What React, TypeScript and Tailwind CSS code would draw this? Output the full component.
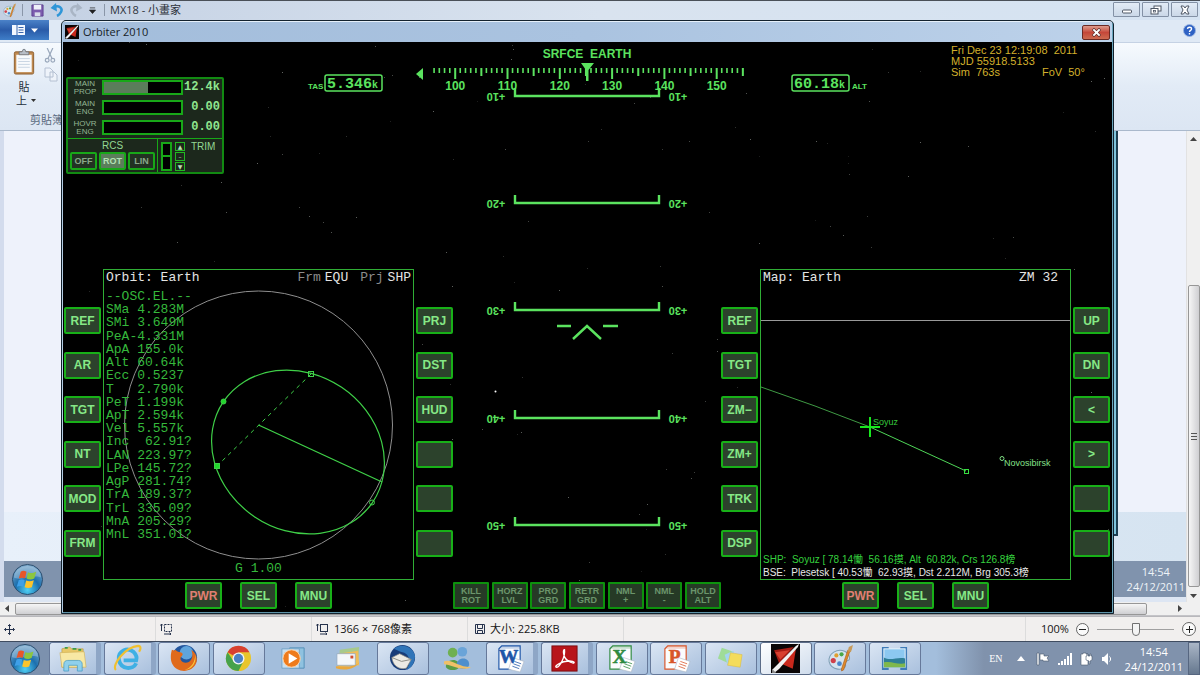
import type { ReactNode } from "react";
import clsx from "clsx";

const ORBIT_ELEMENTS = [
  "--OSC.EL.--",
  "SMa 4.283M",
  "SMi 3.649M",
  "PeA-4.331M",
  "ApA 155.0k",
  "Alt 60.64k",
  "Ecc 0.5237",
  "T   2.790k",
  "PeT 1.199k",
  "ApT 2.594k",
  "Vel 5.557k",
  "Inc  62.91?",
  "LAN 223.97?",
  "LPe 145.72?",
  "AgP 281.74?",
  "TrA 189.37?",
  "TrL 335.09?",
  "MnA 205.29?",
  "MnL 351.01?",
];

const AUTOPILOT = [
  ["KILL", "ROT"],
  ["HORZ", "LVL"],
  ["PRO", "GRD"],
  ["RETR", "GRD"],
  ["NML", "+"],
  ["NML", "-"],
  ["HOLD", "ALT"],
];

// faint star field, seeded so it never changes between renders
const STARS = Array.from({ length: 170 }, (_, i) => {
  const a = Math.abs(Math.sin(i * 12.9898 + 4.1) * 43758.5453) % 1;
  const b = Math.abs(Math.sin(i * 78.233 + 1.7) * 24634.6345) % 1;
  const c = Math.abs(Math.sin(i * 39.425 + 9.2) * 13758.1234) % 1;
  return { x: Math.round(a * 1048), y: Math.round(b * 566), o: 0.12 + c * 0.35 };
});

const HEADINGS = Array.from({ length: 60 }, (_, i) => 96 + i);
const headingX = (deg: number) => (deg - 125.2) * 5.23;

/* ---------- Orbiter ---------- */

function PanelButton({ label, danger }: { label: string; danger?: boolean }) {
  return (
    <button
      aria-label={label || "unassigned"}
      className={clsx(
        "h-[27px] w-[37px] shrink-0 rounded-[2px] border-2 border-[#18b018] bg-[#2c422c] text-[12px] leading-none font-bold whitespace-nowrap",
        danger ? "text-[#e07f72]" : "text-[#86e886]"
      )}
    >
      {label}
    </button>
  );
}

function Mfd({ left, right, children }: { left: string[]; right: string[]; children: ReactNode }) {
  return (
    <section className="flex shrink-0 flex-col items-center gap-[2px]">
      <div className="flex gap-[2px]">
        <div className="flex flex-col justify-between pt-[38px] pb-[23px]">
          {left.map((l, i) => (
            <PanelButton key={i} label={l} />
          ))}
        </div>
        <div className="grid h-[311px] w-[311px] border border-[#2fae35] bg-black font-['Liberation_Mono',monospace] text-[13px] leading-[13px]">
          {children}
        </div>
        <div className="flex flex-col justify-between pt-[38px] pb-[23px]">
          {right.map((l, i) => (
            <PanelButton key={i} label={l} />
          ))}
        </div>
      </div>
      <div className="flex gap-[18px]">
        <PanelButton label="PWR" danger />
        <PanelButton label="SEL" />
        <PanelButton label="MNU" />
      </div>
    </section>
  );
}

function OrbitScreen() {
  return (
    <>
      <svg className="col-start-1 row-start-1 size-full" viewBox="0 0 309 309" fill="none">
        <circle cx="154.500" cy="155" r="134" stroke="#8f8f8f" />
        <g stroke="#3fd048">
          <ellipse cx="194" cy="182" rx="90" ry="78" transform="rotate(34 194 182)" strokeWidth="1.200" />
          <path d="M207 104 L113 196" strokeDasharray="4 4" />
          <path d="M154.500 155 L278 212" strokeWidth="1.300" />
          <rect x="204.500" y="101.500" width="5" height="5" />
          <rect x="110.500" y="193.500" width="5" height="5" fill="#22d82c" />
          <circle cx="119.500" cy="131.500" r="2.500" fill="#22d82c" />
          <circle cx="268" cy="232.500" r="2.500" />
        </g>
      </svg>
      <div className="col-start-1 row-start-1 flex flex-col pt-px pr-[2px] pb-[4px] pl-[2px] text-[#35b83c]">
        <header className="flex justify-between text-[#e4e4e4]">
          <h2>Orbit: Earth</h2>
          <p className="flex gap-1">
            <span className="text-[#8c8c8c]">Frm</span>
            <span>EQU</span>
            <span className="ml-2 text-[#8c8c8c]">Prj</span>
            <span>SHP</span>
          </p>
        </header>
        <ul className="mt-[6px] flex h-[251px] flex-col justify-between whitespace-pre">
          {ORBIT_ELEMENTS.map((row) => (
            <li key={row}>{row}</li>
          ))}
        </ul>
        <p className="mt-auto text-center">G 1.00</p>
      </div>
    </>
  );
}

function MapScreen() {
  return (
    <>
      <svg className="col-start-1 row-start-1 size-full font-['Liberation_Sans',sans-serif] text-[9px]" viewBox="0 0 309 309" fill="none">
        <path d="M0 50.500 H309" stroke="#9a9a9a" />
        <path d="M0 117 L54 136 L109 157" stroke="#3f9a44" />
        <path d="M109 157 L205 201" stroke="#4fd658" />
        <path d="M99 157 H119 M109 147 V167" stroke="#18e61e" strokeWidth="2" />
        <rect x="203.500" y="199.500" width="4" height="4" stroke="#37e040" />
        <circle cx="241" cy="188.500" r="2" stroke="#7fe084" />
        <text x="112" y="155" fill="#35c83c">Soyuz</text>
        <text x="243" y="196" fill="#86e08a">Novosibirsk</text>
      </svg>
      <div className="col-start-1 row-start-1 flex flex-col justify-between pt-px pl-[2px]">
        <header className="flex justify-between pr-3 text-[#e4e4e4]">
          <h2>Map: Earth</h2>
          <span>ZM 32</span>
        </header>
        <div className="font-['Liberation_Sans','Noto_Sans_CJK_TC',sans-serif] text-[10px] leading-[13px] whitespace-pre">
          <p className="text-[#35d03e]">SHP:  Soyuz [ 78.14慟  56.16摸, Alt  60.82k, Crs 126.8榜</p>
          <p className="text-[#e8e8e8]">BSE:  Plesetsk [ 40.53慟  62.93摸, Dst 2.212M, Brg 305.3榜</p>
        </div>
      </div>
    </>
  );
}

function Gauge({ name, value, fill }: { name: [string, string]; value: string; fill: string }) {
  return (
    <div className="flex h-[15px] items-center">
      <span className="w-[34px] text-center text-[8px] leading-[8px] text-[#93b593]">
        {name[0]}
        <br />
        {name[1]}
      </span>
      <span className="h-[15px] w-[81px] border-2 border-[#18a818] bg-black">
        <span className={clsx("block h-full bg-[#5b7d5b]", fill)} />
      </span>
      <span className="flex-1 text-right font-['Liberation_Mono',monospace] text-[12px] leading-[15px] font-bold text-[#8fe68f]">
        {value}
      </span>
    </div>
  );
}

function EnginePanel() {
  return (
    <section className="w-[158px] rounded-[2px] border-2 border-[#128a12] bg-[#1c281c]">
      <div className="flex flex-col gap-[5px] pt-px pr-[2px] pb-[3px]">
        <Gauge name={["MAIN", "PROP"]} value="12.4k" fill="w-[57%]" />
        <Gauge name={["MAIN", "ENG"]} value="0.00" fill="w-0" />
        <Gauge name={["HOVR", "ENG"]} value="0.00" fill="w-0" />
      </div>
      <div className="flex border-t border-[#18a818]">
        <div className="flex flex-col items-center border-r border-[#18a818] px-[2px] pb-[2px]">
          <span className="text-[10px] leading-[13px] text-[#93d893]">RCS</span>
          <div className="flex gap-[2px]">
            {["OFF", "ROT", "LIN"].map((m) => (
              <button
                key={m}
                className={clsx(
                  "h-[18px] w-[27px] rounded-[2px] border-2 border-[#18a818] text-[9px] leading-none font-bold",
                  m === "ROT" ? "bg-[#5b7d5b] text-[#b4e0b4]" : "bg-[#223222] text-[#8aa88a]"
                )}
              >
                {m}
              </button>
            ))}
          </div>
        </div>
        <div className="flex flex-1 gap-[3px] pt-[3px] pl-[3px]">
          <div className="h-[29px] w-[11px] border-2 border-[#18a818] bg-black">
            <div className="mt-[11px] h-[2px] bg-[#18a818]" />
          </div>
          <div className="flex h-[29px] w-[10px] flex-col justify-between">
            {["▲", "–", "▼"].map((s) => (
              <button
                key={s}
                className="flex h-[9px] items-center justify-center border border-[#22b822] font-['DejaVu_Sans',sans-serif] text-[6px] leading-none text-[#b8e0b8]"
              >
                {s}
              </button>
            ))}
          </div>
          <span className="pl-[3px] text-[10px] leading-[10px] text-[#93d893]">TRIM</span>
        </div>
      </div>
    </section>
  );
}

function Hud() {
  return (
    <svg
      width="581"
      height="568"
      viewBox="-290 0 581 568"
      className="shrink-0 font-['Liberation_Sans',sans-serif] font-bold"
      fill="#5be35f"
    >
      <text x="0" y="16" textAnchor="middle" fontSize="12" className="whitespace-pre">
        SRFCE  EARTH
      </text>

      {/* heading tape */}
      <path d="M-171 32 L-164 26 V38 Z" />
      {HEADINGS.map((d) => (
        <rect
          key={d}
          x={headingX(d) - 1}
          y="26"
          width={d % 5 === 0 ? 2 : 1.6}
          height={d % 10 === 0 ? 11 : d % 5 === 0 ? 8 : 5}
        />
      ))}
      {[100, 110, 120, 130, 140, 150].map((d) => (
        <text key={d} x={headingX(d)} y="48" textAnchor="middle" fontSize="12">
          {d}
        </text>
      ))}
      <path d="M-6 21 H7 L1.500 28 V39 H-1 V28 Z" />

      {/* speed and altitude */}
      <g fill="none" stroke="#5be35f" strokeWidth="1.500">
        <rect x="-262" y="33" width="57" height="16" rx="2" />
        <rect x="205" y="33" width="57" height="16" rx="2" />
      </g>
      <g fontSize="8">
        <text x="-279" y="47">TAS</text>
        <text x="265" y="47">ALT</text>
      </g>
      <g className="font-['Liberation_Mono',monospace]" fontSize="15">
        <text x="-260" y="46">
          5.346<tspan fontSize="10">k</tspan>
        </text>
        <text x="207" y="46">
          60.18<tspan fontSize="10">k</tspan>
        </text>
      </g>

      {/* pitch ladder, inverted while pitch labels run downwards */}
      {[10, 20, 30, 40, 50].map((p, i) => {
        const y = 54 + Math.round(i * 107.2);
        return (
          <g key={p}>
            <path d={`M-72 ${y - 8} V${y} H72 V${y - 8}`} fill="none" stroke="#5be35f" strokeWidth="2.400" />
            <text fontSize="11" textAnchor="middle" transform={`translate(-91 ${y - 3}) rotate(180)`}>
              +{p}
            </text>
            <text fontSize="11" textAnchor="middle" transform={`translate(91 ${y - 3}) rotate(180)`}>
              +{p}
            </text>
          </g>
        );
      })}
      <path d="M-30 284 H-16 M16 284 H31 M-14 297 L0 284 L14 297" fill="none" stroke="#5be35f" strokeWidth="2.400" />
    </svg>
  );
}

function ShuttleIcon({ className }: { className?: string }) {
  return (
    <svg viewBox="0 0 28 28" className={className} aria-hidden="true">
      <rect width="28" height="28" fill="#0a0505" />
      <path d="M3 6 L22 3 L8 19 Z" fill="#a81c14" />
      <path d="M24 5 L21 24 L10 19 Z" fill="#c9281c" />
      <path d="M4 8 L18 6 L9 15 Z" fill="#d84030" />
      <path d="M27 0 L24 2 L1 25 L3 28 L8 24 L26 3 Z" fill="#f2f2f2" />
      <path d="M1 28 L1 24 L5 28 Z" fill="#888" />
    </svg>
  );
}

function OrbiterWindow() {
  return (
    <div className="absolute top-[20px] right-[86px] bottom-[61px] left-[61px] flex flex-col overflow-hidden rounded-t-[5px] border border-[#13222e] bg-black">
      <div className="flex flex-1 flex-col border border-t-[#e6f0fa] border-r-[#6aa6bd] border-b-[#5e93a8] border-l-[#b4cde4]">
        <div className="flex h-5 items-center gap-1 bg-linear-to-r from-[#a3bddb] via-[#aac3e0] to-[#bdd2ea] pr-[2px] pl-[2px]">
          <ShuttleIcon className="size-[14px]" />
          <h1 className="flex-1 font-['Open_Sans','Noto_Sans',sans-serif] text-[11px] text-[#151c26]">Orbiter 2010</h1>
          <button
            aria-label="Close Orbiter"
            className="flex h-[15px] w-[28px] items-center justify-center rounded-[2px] border border-[#6b2a24] bg-linear-to-b from-[#dd9a8c] via-[#c4473a] to-[#cc6a50]"
          >
            <svg viewBox="0 0 12 10" className="h-[9px] w-[11px]">
              <path d="M2 1 L10 9 M10 1 L2 9" stroke="#5c3030" strokeWidth="3.600" />
              <path d="M2.500 1.500 L9.500 8.500 M9.500 1.500 L2.500 8.500" stroke="#fff" strokeWidth="2.200" />
            </svg>
          </button>
        </div>

        <main className="relative flex flex-1 flex-col justify-between font-['Liberation_Sans',sans-serif]">
          <svg className="absolute inset-0 size-full" aria-hidden="true">
            {STARS.map((s, i) => (
              <rect key={i} x={s.x} y={s.y} width="1" height="1" fill="#cfd6cf" opacity={s.o} />
            ))}
            <circle cx="432.500" cy="349.500" r="1" fill="#fff" />
          </svg>
          <div className="absolute inset-0 flex justify-center">
            <Hud />
          </div>

          <div className="relative flex items-start justify-between">
            <div className="pt-[35px] pl-[3px]">
              <EnginePanel />
            </div>
            <div className="w-[161px] pt-[3px] text-[11px] leading-[11px] whitespace-pre text-[#d3b02c]">
              <p>Fri Dec 23 12:19:08  2011</p>
              <p>MJD 55918.5133</p>
              <p className="flex gap-[42px]">
                <span>Sim  763s</span>
                <span>FoV  50°</span>
              </p>
            </div>
          </div>

          <div className="relative flex items-end pr-[2px] pb-[3px] pl-px">
            <Mfd left={["REF", "AR", "TGT", "NT", "MOD", "FRM"]} right={["PRJ", "DST", "HUD", "", "", ""]}>
              <OrbitScreen />
            </Mfd>
            <div className="flex flex-1 justify-between">
              {AUTOPILOT.map(([a, b]) => (
                <button
                  key={a + b}
                  className="h-[27px] w-[36px] rounded-[1px] border-2 border-[#0d920d] bg-[#263a26] text-[9px] leading-[9px] font-bold text-[#6b956b]"
                >
                  {a}
                  <br />
                  {b}
                </button>
              ))}
            </div>
            <Mfd left={["REF", "TGT", "ZM−", "ZM+", "TRK", "DSP"]} right={["UP", "DN", "<", ">", "", ""]}>
              <MapScreen />
            </Mfd>
          </div>
        </main>
      </div>
    </div>
  );
}

/* ---------- Paint ---------- */

function PaletteIcon({ className }: { className?: string }) {
  return (
    <svg viewBox="0 0 28 28" className={className} aria-hidden="true">
      <path d="M3 17 C2 9 11 4 18 7 C23 9 24 15 21 16 C18 17 18 19 19 21 C18 26 5 26 3 17 Z" fill="#d5e4ee" stroke="#7f9fb5" />
      <circle cx="7" cy="16" r="2.500" fill="#d0404a" />
      <circle cx="10" cy="11" r="2" fill="#e0a030" />
      <circle cx="15" cy="10" r="2" fill="#4aa848" />
      <circle cx="13" cy="19" r="2.300" fill="#4a86cc" />
      <path d="M23 7 L17 25 L15 26 L15 24 L21 6 Z" fill="#e08a2c" stroke="#a85c18" strokeWidth=".6" />
      <path d="M21 7 L22 3 L26 1 L25 5 L24 8 Z" fill="#c79a5a" />
    </svg>
  );
}

function CaptionButton({ label, children }: { label: string; children: ReactNode }) {
  return (
    <button
      aria-label={label}
      className="flex h-[15px] w-[27px] items-center justify-center rounded-[1px] border border-[#8391a5] bg-linear-to-b from-[#e3ecf6] to-[#cbd8e8]"
    >
      <svg viewBox="0 0 12 10" className="h-[10px] w-[12px]" fill="#fff" stroke="#4d5664">
        {children}
      </svg>
    </button>
  );
}

function PaintTitleBar() {
  return (
    <header className="flex h-5 shrink-0 items-start border-t border-[#4a5058] bg-linear-to-r from-[#c3d0e3] via-[#d9e3ef] to-[#d5e3f2] pr-[2px]">
      <div className="flex h-[18px] items-center pl-[2px]">
        <PaletteIcon className="size-[15px]" />
        <span className="ml-[5px] h-3 w-px bg-[#8a96a8]" />
        <button aria-label="Save" className="ml-2">
          <svg viewBox="0 0 14 14" className="size-[13px]">
            <path d="M1 1 H13 V13 H1 Z" fill="#7c5cae" stroke="#5c4090" />
            <rect x="3" y="1" width="8" height="5" fill="#eef0fa" />
            <rect x="4" y="9" width="6" height="4" fill="#d8dcea" />
          </svg>
        </button>
        <button aria-label="Undo" className="ml-[6px]">
          <svg viewBox="0 0 14 14" className="size-[14px]" fill="none">
            <path d="M4 4 C9 2 13 5 11 9 C10 11 9 12 7 13" stroke="#2f96d8" strokeWidth="2.600" />
            <path d="M0.500 5 L6 0 L7 8.500 Z" fill="#2f96d8" />
          </svg>
        </button>
        <button aria-label="Redo" className="ml-[5px]">
          <svg viewBox="0 0 14 14" className="size-[14px]" fill="none">
            <path d="M10 4 C5 2 1 5 3 9 C4 11 5 12 7 13" stroke="#a9b5c5" strokeWidth="2.600" />
            <path d="M13.500 5 L8 0 L7 8.500 Z" fill="#a9b5c5" />
          </svg>
        </button>
        <button aria-label="Customize quick access" className="ml-[6px]">
          <svg viewBox="0 0 8 8" className="size-[7px]">
            <path d="M1 1 H7 M0.500 3.500 H7.500 L4 7.500 Z" stroke="#222" strokeWidth=".8" fill="#222" />
          </svg>
        </button>
        <span className="mr-[5px] ml-2 h-3 w-px bg-[#8a96a8]" />
        <span className="font-['Open_Sans','Noto_Sans_CJK_TC',sans-serif] text-[11px] leading-[16px] text-[#2c3138]">MX18 - 小畫家</span>
      </div>
      <div className="ml-auto flex gap-[2px] pt-px">
        <CaptionButton label="Minimize">
          <rect x="1.500" y="5" width="9" height="3" rx="1" />
        </CaptionButton>
        <CaptionButton label="Restore">
          <rect x="4" y="1" width="7" height="5" />
          <rect x="1" y="3.500" width="7" height="5.500" />
          <rect x="3.500" y="5.500" width="2" height="1.500" strokeWidth=".8" />
        </CaptionButton>
        <CaptionButton label="Close">
          <path d="M2 1 H4.500 L6 3 L7.500 1 H10 L8 5 L10 9 H7.500 L6 7 L4.500 9 H2 L4 5 Z" />
        </CaptionButton>
      </div>
    </header>
  );
}

function Ribbon() {
  return (
    <div className="shrink-0">
      <div className="flex h-[22px] items-start justify-between bg-[#dfe9f5] pr-1">
        <button
          aria-label="Paint menu"
          className="flex h-5 w-[49px] items-center justify-center gap-[6px] bg-linear-to-b from-[#4b82c8] via-[#2a5ba8] to-[#3f7ec8]"
        >
          <svg viewBox="0 0 13 10" className="h-[10px] w-[13px]">
            <rect width="13" height="10" fill="#f4f8ff" />
            <path d="M5 0 V10 M6.500 2.500 H11.500 M6.500 5 H11.500 M6.500 7.500 H11.500" stroke="#3a66ac" />
          </svg>
          <svg viewBox="0 0 7 5" className="h-[5px] w-[7px]">
            <path d="M0 0.500 H7 L3.500 4.500 Z" fill="#fff" />
          </svg>
        </button>
        <button aria-label="Help" className="mt-1">
          <svg viewBox="0 0 14 14" className="size-[13px]">
            <circle cx="7" cy="7" r="6.500" fill="#2f62c4" stroke="#9ab4e0" />
            <path d="M4.800 5.300 C5 2.800 9.300 2.800 9.200 5.300 C9.100 6.800 7 7 7 8.600 M7 9.800 V11.300" stroke="#fff" strokeWidth="1.500" fill="none" />
          </svg>
        </button>
      </div>
      <div className="flex h-[89px] border-t border-b border-t-[#c5d2e4] border-b-[#aab9cc] bg-linear-to-b from-[#f6fafe] via-[#e2ebf6] to-[#dce6f3] pl-3 font-['Noto_Sans_CJK_TC',sans-serif] text-[11px] leading-[14px] text-[#26303c]">
        <div className="flex w-[90px] flex-col justify-between">
          <div className="flex gap-2 pt-[5px]">
            <button className="flex flex-col items-center">
              <svg viewBox="0 0 24 28" className="h-[27px] w-6">
                <rect x="2" y="4" width="20" height="23" rx="1.500" fill="#c08a50" stroke="#8e5f30" />
                <rect x="4" y="7" width="16" height="18" fill="#f8fafc" />
                <path d="M6 11 H18 M6 14 H18 M6 17 H18 M6 20 H18" stroke="#c8d4e2" />
                <path d="M7 7 V4 H10 L11 1.500 H13 L14 4 H17 V7 Z" fill="#b8bec6" stroke="#686e78" strokeWidth=".8" />
              </svg>
              <span className="pt-[4px]">貼</span>
              <span className="flex items-center gap-1 pl-1">
                上
                <svg viewBox="0 0 5 3" className="h-[3px] w-[5px]">
                  <path d="M0 0 H5 L2.500 3 Z" fill="#333" />
                </svg>
              </span>
            </button>
            <div className="flex flex-col gap-1">
              <svg viewBox="0 0 12 16" className="h-[15px] w-3" fill="none" stroke="#9aa8bc" strokeWidth="1.300">
                <path d="M3 0 L8 11 M9 0 L4 11" />
                <circle cx="3" cy="13" r="2" />
                <circle cx="9" cy="13" r="2" />
              </svg>
              <svg viewBox="0 0 14 15" className="h-[15px] w-[14px]" fill="#eef3fa" stroke="#b4c0d2">
                <path d="M1 1 H6 L9 4 V10 H1 Z M6 5 H10 L13 8 V14 H6 Z" />
              </svg>
            </div>
          </div>
          <span className="pb-[4px] pl-[18px] whitespace-nowrap text-[#5a6a80]">剪貼簿</span>
        </div>
      </div>
    </div>
  );
}

function StartOrb({ className }: { className?: string }) {
  return (
    <svg viewBox="0 0 34 34" className={className} aria-hidden="true">
      <defs>
        <radialGradient id="orb" cx=".5" cy=".85" r=".9">
          <stop offset="0" stopColor="#4fd0f4" />
          <stop offset=".45" stopColor="#1c6fae" />
          <stop offset="1" stopColor="#8db4d2" />
        </radialGradient>
      </defs>
      <circle cx="17" cy="17" r="15.500" fill="url(#orb)" stroke="#2c4c6c" />
      <path d="M3 15 C4 -1 30 -1 31 15 C24 11 10 19 3 15 Z" fill="#fff" opacity=".25" />
      <path d="M10 9 C12 7.500 14 8 16 9 L14.500 16 C12.500 15 10.500 15 8 16 Z" fill="#e8562a" />
      <path d="M17.500 9.500 C20 11 22.500 10.500 26 9 L24 16 C21 17.500 18.500 17 16 16 Z" fill="#8cc63f" />
      <path d="M8 17.500 C10 16.500 12 16.500 14 17.500 L12.500 24.500 C10.500 23.500 8.500 23.500 6 24.500 Z" fill="#3fa0e8" />
      <path d="M15.700 18 C18 19.200 20.500 19 23.500 17.700 L21.500 25 C19 26 16.500 26 14 25 Z" fill="#fcc42c" />
    </svg>
  );
}

function PaintCanvas() {
  return (
    <div className="flex min-h-0 flex-1">
      <div className="flex min-w-0 flex-1 flex-col overflow-hidden border-l-4 border-[#d3dced] bg-[#eef2fb]">
        <div className="flex flex-1 justify-end pr-[68px]">
          <div className="relative -mb-6 w-[5px] border-r-2 border-b-2 border-[#1c3d50] bg-[#7fc4dc]" />
        </div>
        <div className="h-[49px] bg-linear-to-r from-[#e8f0fa] to-[#d6e4f1]" />
        <div className="flex h-9 items-center justify-between bg-[#8093ad] pr-px pl-[7px] font-['Open_Sans',sans-serif] text-[11px] leading-[15px] text-[#eef3f8]">
          <StartOrb className="size-[33px]" />
          <p className="text-center">
            14:54
            <br />
            24/12/2011
          </p>
        </div>
        <div className="h-[5px] bg-[#dde6f3]" />
      </div>
      <div className="flex w-[14px] shrink-0 flex-col items-center border-l border-[#e2e2e2] bg-[#f0f0f0] pt-[6px] pb-1">
        <svg viewBox="0 0 7 4" className="h-1 w-[7px]"><path d="M0 4 L3.500 0 L7 4 Z" fill="#444" /></svg>
        <div className="mt-[144px] flex w-3 flex-1 flex-col items-center justify-center gap-[2px] rounded-[2px] border border-[#979797] bg-linear-to-r from-[#f6f6f6] to-[#cfcfd2]">
          <span className="h-px w-[6px] bg-[#555]" />
          <span className="h-px w-[6px] bg-[#555]" />
          <span className="h-px w-[6px] bg-[#555]" />
        </div>
        <svg viewBox="0 0 7 4" className="mt-[7px] h-1 w-[7px]"><path d="M0 0 L3.500 4 L7 0 Z" fill="#444" /></svg>
      </div>
    </div>
  );
}

function StatusCell({ className, children }: { className?: string; children?: ReactNode }) {
  return <div className={clsx("flex w-[156px] items-center gap-[5px] border-r border-[#dcdcdc] pl-1", className)}>{children}</div>;
}

function StatusBar() {
  return (
    <footer className="flex h-[25px] shrink-0 items-stretch border-t border-[#b8b8bc] bg-[#f1efee] font-['Open_Sans','Noto_Sans_CJK_TC',sans-serif] text-[11px] text-[#151515]">
      <StatusCell>
        <svg viewBox="0 0 11 11" className="size-[11px]" fill="none" stroke="#26324c">
          <path d="M5.500 0.500 V10.500 M0.500 5.500 H10.500 M4 2 L5.500 0.500 L7 2 M4 9 L5.500 10.500 L7 9 M2 4 L0.500 5.500 L2 7 M9 4 L10.500 5.500 L9 7" />
        </svg>
      </StatusCell>
      <StatusCell>
        <svg viewBox="0 0 13 12" className="h-3 w-[13px]" fill="none" stroke="#26324c">
          <path d="M1.500 1 V8 M0.500 2.500 L1.500 1 L3 2.500 M4 11 H11 M9.500 9.500 L11 11 L9.500 12" />
          <rect x="4.500" y="1.500" width="7" height="7" strokeDasharray="2 1" />
        </svg>
      </StatusCell>
      <StatusCell>
        <svg viewBox="0 0 13 12" className="h-3 w-[13px]" fill="none" stroke="#26324c">
          <path d="M1.500 1 V8 M0.500 2.500 L1.500 1 L3 2.500 M4 11 H11 M9.500 9.500 L11 11 L9.500 12" />
          <rect x="4.500" y="1.500" width="7" height="7" />
        </svg>
        1366 × 768像素
      </StatusCell>
      <StatusCell className="pl-[7px]">
        <svg viewBox="0 0 10 10" className="size-[10px]" fill="none" stroke="#26324c">
          <path d="M0.500 0.500 H9.500 V9.500 H0.500 Z M2.500 1 V4.500 H7.500 V1 M2.500 9 V6.500 H7.500 V9" />
        </svg>
        大小: 225.8KB
      </StatusCell>
      <div className="flex-1 border-r border-[#dcdcdc]" />
      <div className="flex w-[174px] items-center pr-1 pl-[15px]">
        <label htmlFor="zoom" className="w-[35px]">100%</label>
        <button aria-label="Zoom out" className="flex size-[13px] items-center justify-center rounded-full border border-[#666] bg-[#fafafa]">
          <span className="h-px w-[7px] bg-[#222]" />
        </button>
        <input
          id="zoom"
          type="range"
          defaultValue={50}
          className="mx-2 h-4 min-w-0 flex-1 appearance-none bg-transparent bg-[linear-gradient(#a0a0a0,#a0a0a0)] bg-[length:100%_1px] bg-center bg-no-repeat [&::-webkit-slider-thumb]:h-[13px] [&::-webkit-slider-thumb]:w-2 [&::-webkit-slider-thumb]:appearance-none [&::-webkit-slider-thumb]:rounded-b-[4px] [&::-webkit-slider-thumb]:border [&::-webkit-slider-thumb]:border-[#707070] [&::-webkit-slider-thumb]:bg-[#f4f4f4]"
        />
        <button aria-label="Zoom in" className="flex size-[14px] items-center justify-center rounded-full border border-[#666] bg-[#fafafa]">
          <svg viewBox="0 0 9 9" className="size-[9px]" stroke="#222"><path d="M4.500 1 V8 M1 4.500 H8" /></svg>
        </button>
      </div>
    </footer>
  );
}

/* ---------- Taskbar ---------- */

function OfficeIcon({ letter, color }: { letter: string; color: string }) {
  return (
    <>
      <path d="M6 2 H25 V26 H3 V5 Z" fill="#fbfcfe" stroke={color} strokeWidth="1.200" />
      <path d="M6 2 H25 V5 H4 Z" fill={color} opacity=".25" />
      <path d="M17 14 L29 18 L25 29 L13 26 Z" fill="#fff" stroke="#a8b4c2" strokeWidth=".6" />
      <path d="M19 18 L26 20.500 M18 20.500 L25 23 M17 23 L24 25.500" stroke={color} strokeWidth=".8" />
      <text
        x="13"
        y="20"
        textAnchor="middle"
        fontSize="20"
        fontWeight="bold"
        fill={color}
        stroke={color}
        strokeWidth=".6"
        className="font-['Liberation_Serif',serif]"
      >
        {letter}
      </text>
    </>
  );
}

type Task = { name: string; open?: boolean; stacked?: boolean; active?: boolean; icon: ReactNode };

const TASKS: Task[] = [
  {
    name: "Windows Explorer",
    open: true,
    stacked: true,
    icon: (
      <>
        <path d="M3 5 L11 3 L13 5 H25 V24 H3 Z" fill="#e8c868" stroke="#b8953c" strokeWidth=".6" />
        <path d="M6 4 H9 M14 5 H18 M20 6 H23" stroke="#3c9c48" strokeWidth="1.800" />
        <path d="M1 9 L26 8 L28 24 H3 Z" fill="#f8e8a4" stroke="#cfae54" strokeWidth=".6" />
        <path d="M5 28 V21 C5 18 7 17 9 17 H20 C23 17 24 19 24 21 V28 H19 V22 H10 V28 Z" fill="#8fd0ec" stroke="#4a9cc4" strokeWidth=".8" />
      </>
    ),
  },
  {
    name: "Internet Explorer",
    open: true,
    stacked: true,
    icon: (
      <>
        <path d="M24 20 C21 27 8 27 6 16 C5 7 15 3 21 8 C24 11 25 14 24 17 H11" fill="none" stroke="#3fb0e4" strokeWidth="4" />
        <path d="M3 27 C-2 22 13 3 26 2 C29 2 29 5 27 8" fill="none" stroke="#f0c030" strokeWidth="2.200" />
      </>
    ),
  },
  {
    name: "Firefox",
    open: true,
    icon: (
      <>
        <circle cx="15" cy="14" r="13" fill="#23569e" />
        <circle cx="17" cy="9" r="7" fill="#5fa4dc" />
        <path d="M2 6 C4 7 5 7 6 6 C7 9 12 8 13 10 C14 12 10 13 11 16 C13 21 20 20 22 16 C24 12 23 9 22 6 C27 9 29 15 27 20 C23 30 7 31 2 20 C0 15 1 9 2 6 Z" fill="#e06a1c" />
        <path d="M26 11 C28 19 23 26 15 27 C23 24 26 18 26 11 Z" fill="#f8c83c" />
      </>
    ),
  },
  {
    name: "Chrome",
    open: true,
    icon: (
      <>
        <circle cx="15" cy="15" r="13" fill="#e8c52c" />
        <path d="M15 15 L3.700 8.500 A13 13 0 0 1 26.300 8.500 H15 Z" fill="#d8402f" />
        <path d="M3.700 8.500 A13 13 0 0 0 15 28 L20 18 L10 18 Z" fill="#46a24c" />
        <circle cx="15" cy="15" r="6.200" fill="#f2f4f6" />
        <circle cx="15" cy="15" r="4.800" fill="#4a80c4" />
      </>
    ),
  },
  {
    name: "Media Player",
    icon: (
      <>
        <path d="M11 4 H26 V25 H11 Z" fill="#8fc2e0" stroke="#5590b8" />
        <path d="M3 5 H21 V25 H3 Z" fill="#c8dff0" stroke="#74a4c8" />
        <circle cx="13" cy="15" r="9" fill="#ee7b1c" stroke="#fbd8b0" />
        <path d="M10 9.500 V20.500 L19 15 Z" fill="#fff" />
      </>
    ),
  },
  {
    name: "Mail",
    icon: (
      <>
        <path d="M6 6 L26 3 L25 17 L5 20 Z" fill="#a7c98c" />
        <path d="M4 10 L25 7 L26 22 L4 24 Z" fill="#f0bd58" />
        <path d="M3 10 H22 V22 H3 Z" fill="#f4f7fa" stroke="#90a8c0" strokeWidth=".8" />
        <rect x="17" y="12" width="3" height="3" fill="#d05030" />
        <path d="M2 25 C12 28 22 26 27 18 C24 23 14 24 2 23 Z" fill="#eaa83c" />
      </>
    ),
  },
  {
    name: "Thunderbird",
    open: true,
    icon: (
      <>
        <circle cx="15" cy="14" r="13" fill="#183c78" />
        <path d="M6 5 C14 -2 27 3 28 13 C27 21 24 25 19 27 C25 18 22 9 13 8 Z" fill="#2f74b8" />
        <path d="M4 14 L12 10 L24 16 L19 25 C12 27 5 23 4 14 Z" fill="#eceae4" stroke="#8c8c84" strokeWidth=".7" />
        <path d="M4 14 L14 18 L24 16" fill="none" stroke="#8c8c84" />
      </>
    ),
  },
  {
    name: "Messenger",
    icon: (
      <>
        <circle cx="10" cy="9" r="5" fill="#6fb052" />
        <path d="M3 24 C2 15 18 13 17 24 C14 28 6 28 3 24 Z" fill="#5a9c46" />
        <circle cx="20" cy="8" r="5" fill="#6aa4d8" />
        <path d="M14 23 C13 13 28 12 27 22 C25 27 18 27 14 23 Z" fill="#4f8fcc" />
        <path d="M1 18 C9 15 15 24 29 24 C18 29 9 21 1 21 Z" fill="#f0c068" />
      </>
    ),
  },
  { name: "Word", open: true, stacked: true, icon: <OfficeIcon letter="W" color="#1f56a8" /> },
  {
    name: "Adobe Reader",
    open: true,
    stacked: true,
    icon: (
      <>
        <rect x="2" y="2" width="26" height="26" fill="#b8141a" stroke="#7c0c10" />
        <path d="M15 6 C13 6 14 12 16 15 C18 18 25 21 25 19 C25 17 15 17 10 20 C6 22 5 24 7 24 C10 24 16 13 15 6 Z" fill="none" stroke="#fff" strokeWidth="1.400" />
      </>
    ),
  },
  { name: "Excel", open: true, icon: <OfficeIcon letter="X" color="#2f8a40" /> },
  { name: "PowerPoint", open: true, icon: <OfficeIcon letter="P" color="#d8552a" /> },
  {
    name: "Sticky Notes",
    open: true,
    icon: (
      <>
        <path d="M6 4 L18 8 L13 20 L2 15 Z" fill="#9fdc98" />
        <path d="M9 11 L18 7 L20 18 L12 22 Z" fill="#a4d4f0" />
        <path d="M15 9 L27 11 L25 24 L12 22 Z" fill="#f4dc5c" stroke="#d8b83c" strokeWidth=".5" />
      </>
    ),
  },
  { name: "Orbiter", open: true, active: true, icon: <ShuttleIcon /> },
  { name: "Paint", open: true, icon: <PaletteIcon /> },
  {
    name: "Picture Viewer",
    open: true,
    icon: (
      <>
        <path d="M2 3 H9 V6 H21 V3 H28 V27 H21 V24 H9 V27 H2 Z" fill="#3f7cb8" />
        <rect x="4" y="5" width="22" height="19" fill="#8cc8f0" stroke="#e8f4fc" />
        <path d="M4 14 C11 18 18 13 26 15 V24 H4 Z" fill="#2f7f96" />
        <path d="M4 19 C12 17 18 22 26 20 V24 H4 Z" fill="#7fb84c" />
      </>
    ),
  },
];

function Taskbar() {
  return (
    <nav className="flex h-[34px] shrink-0 items-stretch border-t border-[#3f4c60] bg-linear-to-r from-[#a3bedc] from-78% to-[#8092ac] to-82% font-['Open_Sans',sans-serif] text-[11px] text-white">
      <button aria-label="Start" className="flex w-[49px] items-center justify-center bg-[#7c91ae]">
        <StartOrb className="size-8" />
      </button>
      <div className="flex w-[872px] justify-between">
        {TASKS.map((t) => (
          <button
            key={t.name}
            aria-label={t.name}
            className={clsx(
              "flex w-[52px] items-center justify-center rounded-[3px] border",
              !t.open && "border-transparent",
              t.open && !t.active && "border-[#66799a] bg-linear-to-br from-[#dbe6f4] to-[#a9c0dd]",
              t.active && "border-[#5b6c88] bg-linear-to-br from-[#ffffff] to-[#cfdcec]",
              t.stacked && "border-r-[5px] border-r-[#8ea6c6]"
            )}
          >
            <svg viewBox="0 0 30 30" className="size-[29px]">
              {t.icon}
            </svg>
          </button>
        ))}
      </div>
      <div className="ml-auto flex items-center">
        <span className="font-['Liberation_Serif',serif] text-[10px]">EN</span>
        <svg viewBox="0 0 8 5" className="ml-[14px] h-[5px] w-2"><path d="M0 5 L4 0 L8 5 Z" fill="#fff" /></svg>
        <svg viewBox="0 0 14 14" className="ml-[11px] size-[14px]" fill="#fff" stroke="#4b5a70" strokeWidth=".6">
          <path d="M1 1 H3 V13 H1 Z M4 2 H8 V4 H13 L11 6 L13 9 H7 V8 H4 Z" />
        </svg>
        <svg viewBox="0 0 14 12" className="ml-2 h-3 w-[14px]" fill="#fff">
          <path d="M0 10 H2 V12 H0 Z M3 8 H5 V12 H3 Z M6 6 H8 V12 H6 Z M9 3 H11 V12 H9 Z M12 0 H14 V12 H12 Z" />
        </svg>
        <svg viewBox="0 0 13 14" className="ml-2 h-[14px] w-[13px]" fill="#fff" stroke="#4b5a70" strokeWidth=".6">
          <path d="M1 2 H3 V1 H6 V2 H8 V13 H1 Z" />
          <path d="M7 4 V2 H8 V4 H10 V2 H11 V4 H12 V8 L10 9 V12 H9 V9 L6 8 V4 Z" />
        </svg>
        <svg viewBox="0 0 12 14" className="ml-2 h-[14px] w-3" fill="#fff">
          <path d="M1 5 H3 L7 1 V13 L3 9 H1 Z" />
          <path d="M8.500 4.500 C10 6 10 8 8.500 9.500" stroke="#fff" fill="none" />
        </svg>
        <time className="ml-[12px] text-center leading-[15px]">
          14:54
          <br />
          24/12/2011
        </time>
      </div>
      <button aria-label="Show desktop" className="ml-[5px] w-3 border border-[#566680] bg-linear-to-b from-[#aab6c6] to-[#66788f]" />
    </nav>
  );
}

export default function App() {
  return (
    <div className="relative flex h-screen flex-col overflow-hidden bg-[#dde6f3]">
      <PaintTitleBar />
      <Ribbon />
      <PaintCanvas />
      <div className="flex h-[14px] shrink-0 items-center gap-[6px] border-b border-[#c4c4c8] bg-[#f0f0f0] px-[5px]">
        <svg viewBox="0 0 4 7" className="h-[7px] w-1"><path d="M4 0 L0 3.500 L4 7 Z" fill="#444" /></svg>
        <div className="mr-[25px] h-3 flex-1 rounded-[2px] border border-[#979797] bg-linear-to-b from-[#f6f6f6] to-[#cfcfd2]" />
        <svg viewBox="0 0 4 7" className="mr-[13px] h-[7px] w-1"><path d="M0 0 L4 3.500 L0 7 Z" fill="#444" /></svg>
      </div>
      <StatusBar />
      <Taskbar />
      <OrbiterWindow />
    </div>
  );
}
